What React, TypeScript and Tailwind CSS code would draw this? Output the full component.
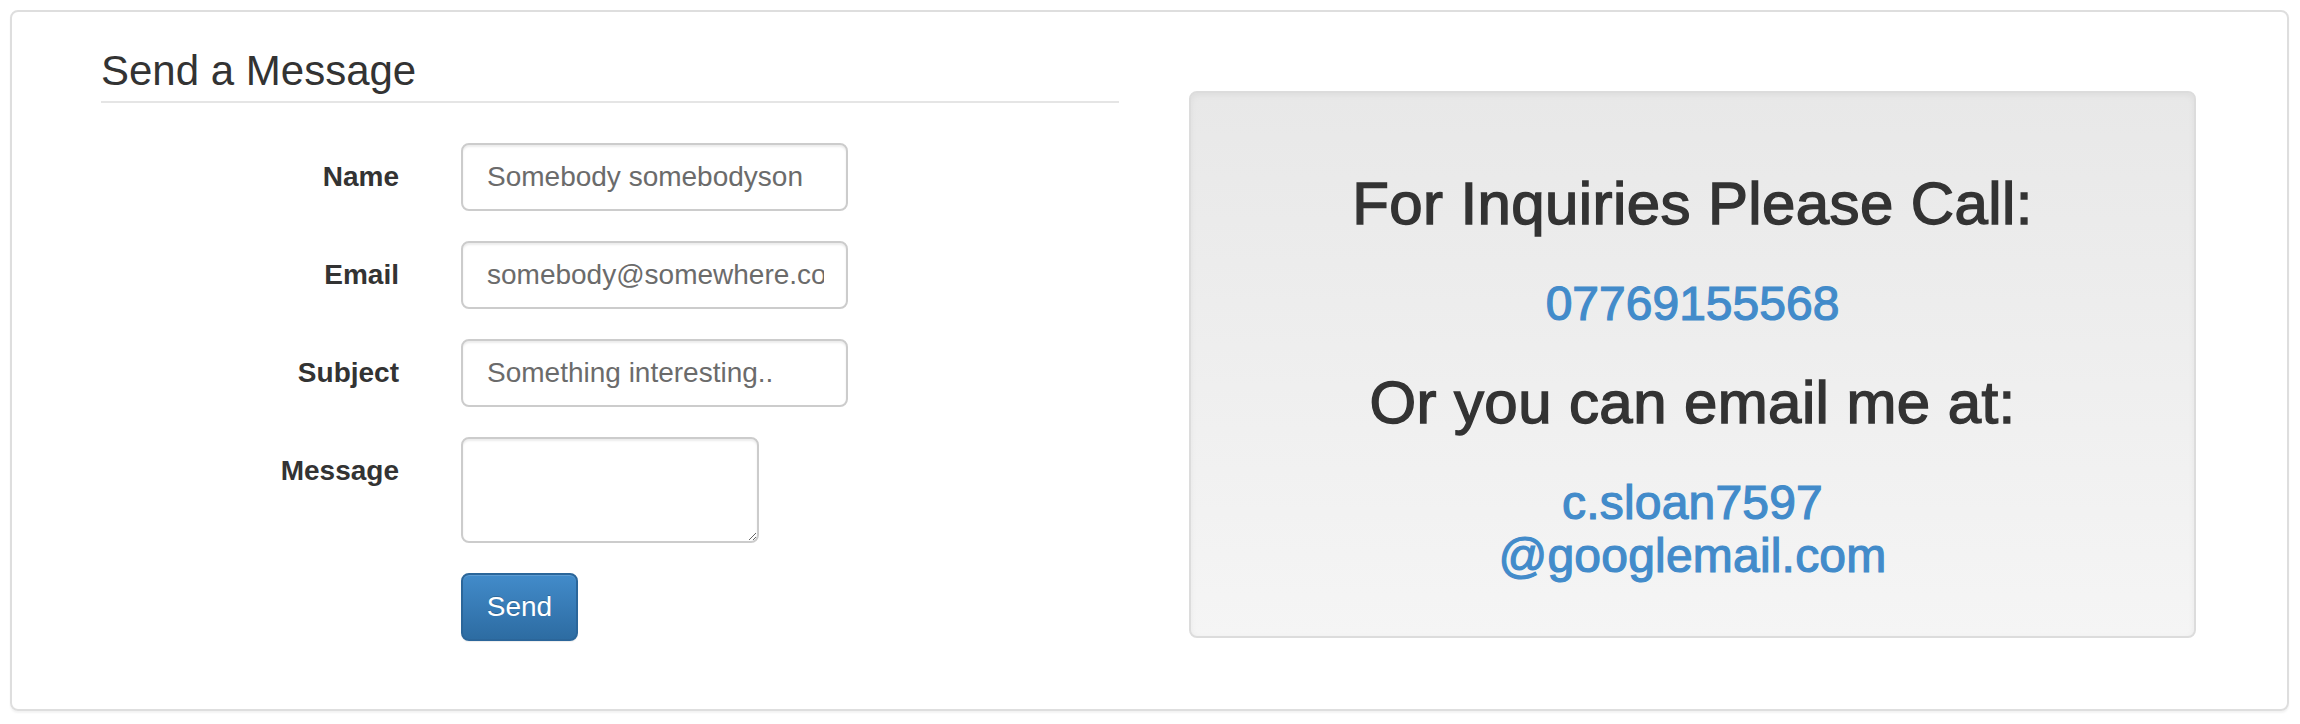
import React from "react";

const font = { fontFamily: '"Liberation Sans", Arial, Helvetica, sans-serif' };

function Row({ label, children }: { label: string; children: React.ReactNode }) {
  return (
    <div className="flex mb-[30px]">
      <label className="w-[298px] shrink-0 text-right pt-[14px] text-[28px] leading-[40px] font-bold text-[#333]">
        {label}
      </label>
      <div className="ml-[62px]">{children}</div>
    </div>
  );
}

const inputCls =
  "block w-[387px] h-[68px] border-2 border-[#cccccc] rounded-[8px] pl-[24px] pr-[22px] text-[28px] text-[#555] bg-white outline-none shadow-[inset_0_2px_2px_rgba(0,0,0,0.075)] placeholder:text-[#6b6b6b]";

export default function App() {
  return (
    <div className="w-[2300px] h-[724px] bg-white pt-[10px] pl-[10px]" style={font}>
      <div className="w-[2279px] h-[701px] border-2 border-[#dedede] rounded-[8px] shadow-[0_2px_2px_rgba(0,0,0,0.05)] flex">
        {/* Left: form */}
        <div className="ml-[89px] w-[1018px] pt-[29px]">
          <div className="border-b-2 border-[#e5e5e5] text-[42px] leading-[60px] text-[#333] mb-[40px]">
            Send a Message
          </div>
          <form onSubmit={(e) => e.preventDefault()}>
            <Row label="Name">
              <input className={inputCls} placeholder="Somebody somebodyson" />
            </Row>
            <Row label="Email">
              <input className={inputCls} placeholder="somebody@somewhere.com" />
            </Row>
            <Row label="Subject">
              <input className={inputCls} placeholder="Something interesting.." />
            </Row>
            <Row label="Message">
              <textarea className="block w-[298px] h-[106px] border-2 border-[#cccccc] rounded-[8px] px-[24px] py-[12px] text-[28px] text-[#555] bg-white outline-none shadow-[inset_0_2px_2px_rgba(0,0,0,0.075)]" />
            </Row>
            <div className="flex">
              <div className="ml-[360px]">
                <button
                  type="submit"
                  className="w-[117px] h-[68px] rounded-[8px] border-2 border-[#2b669a] bg-gradient-to-b from-[#428bca] to-[#2d6ca2] text-white text-[28px] [text-shadow:0_-1px_0_rgba(0,0,0,0.2)] shadow-[inset_0_1px_0_rgba(255,255,255,0.15),0_1px_1px_rgba(0,0,0,0.075)]"
                >
                  Send
                </button>
              </div>
            </div>
          </form>
        </div>

        {/* Right: contact well */}
        <div className="ml-[70px] mt-[79px] w-[1007px] h-[547px] border-2 border-[#dcdcdc] rounded-[8px] bg-gradient-to-b from-[#e8e8e8] to-[#f5f5f5] shadow-[inset_0_2px_6px_rgba(0,0,0,0.05)] pt-[78px] flex flex-col items-center text-center">
          <h2 className="text-[60px] leading-[66px] tracking-[0.4px] text-[#333] [-webkit-text-stroke:1.4px_#333]">
            For Inquiries Please Call:
          </h2>
          <h3 className="mt-[40px] text-[48px] leading-[53px] text-[#428bca] [-webkit-text-stroke:1.2px_#428bca]">
            07769155568
          </h3>
          <h2 className="mt-[40px] text-[60px] leading-[66px] tracking-[0.4px] text-[#333] [-webkit-text-stroke:1.4px_#333]">
            Or you can email me at:
          </h2>
          <h3 className="mt-[40px] text-[48px] leading-[53px] tracking-[0.2px] text-[#428bca] [-webkit-text-stroke:1.2px_#428bca]">
            c.sloan7597
            <br />
            @googlemail.com
          </h3>
        </div>
      </div>
    </div>
  );
}
